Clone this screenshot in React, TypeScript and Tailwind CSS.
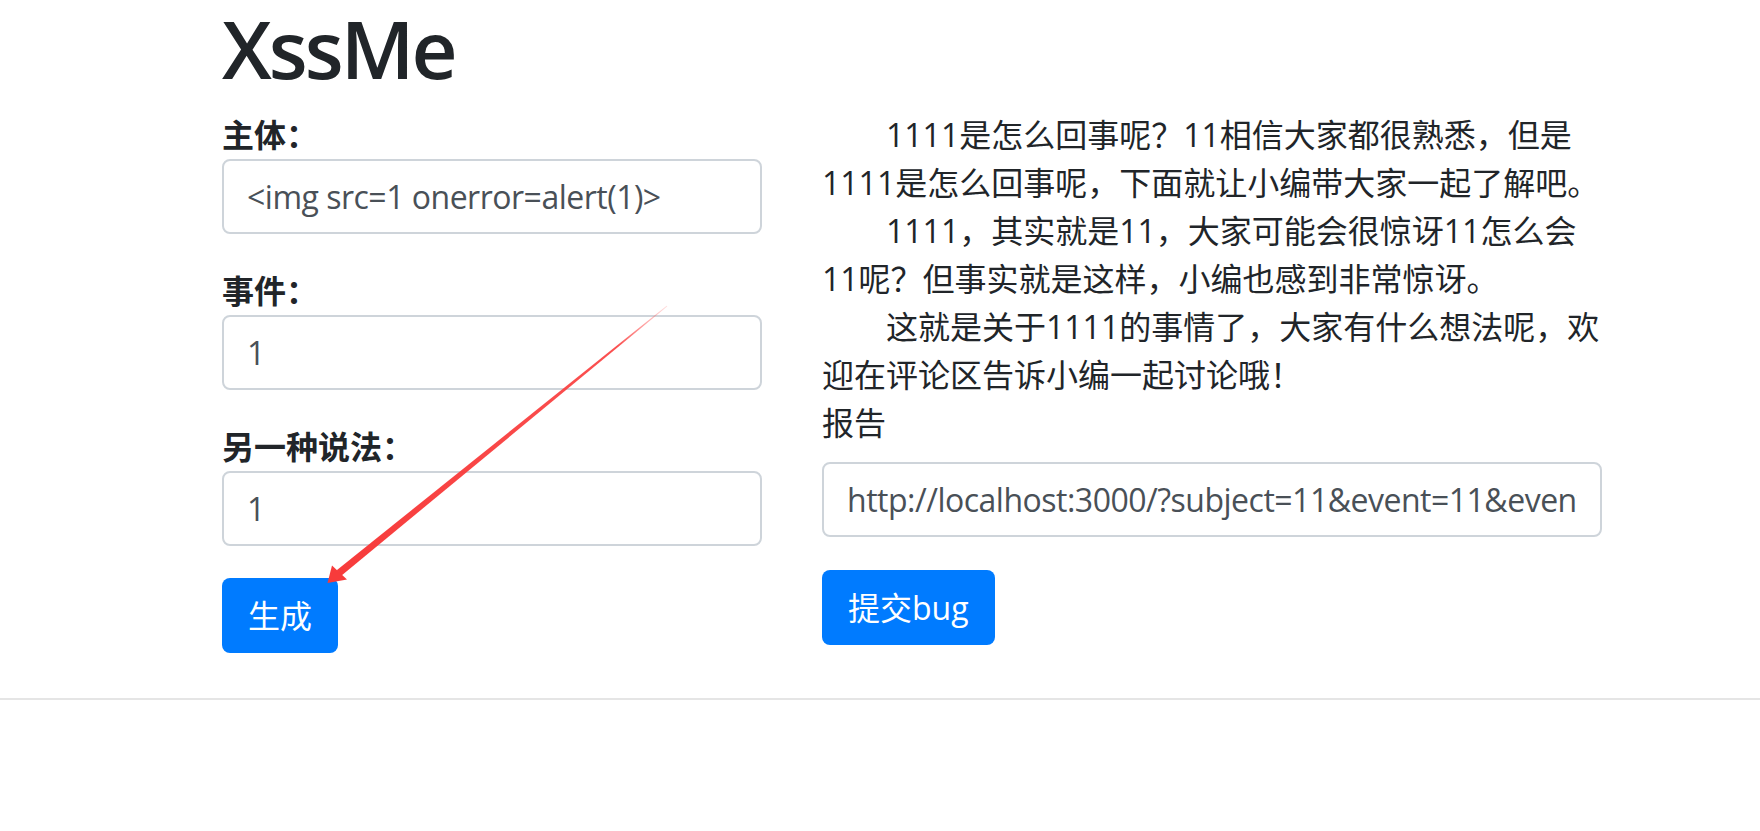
import React from "react";

function Field({ label, value, mb }: { label: string; value: string; mb: string }) {
  return (
    <div className={mb}>
      <label className="block text-[32px] leading-[48px] font-bold text-[#212529]">{label}</label>
      <input
        readOnly
        defaultValue={value}
        className="block w-full h-[75px] border-2 border-[#ced4da] rounded-[8px] px-[23px] text-[32px] leading-[48px] text-[#495057] tracking-[-0.5px] bg-white outline-none"
      />
    </div>
  );
}

export default function App() {
  return (
    <div className="relative w-full min-h-[831px] bg-white text-[#212529] font-['Open_Sans','Noto_Sans_CJK_SC',sans-serif]">
      <div className="pl-[222px]">
        <h1 className="m-0 text-[80px] leading-[96px] font-semibold tracking-[-3px]">XssMe</h1>
        <div className="mt-[15px] flex">
          <div className="w-[540px] flex flex-col items-start">
            <div className="w-full">
              <Field label="主体：" value="<img src=1 onerror=alert(1)>" mb="mb-[33px]" />
              <Field label="事件：" value="1" mb="mb-[33px]" />
              <Field label="另一种说法：" value="1" mb="mb-[32px]" />
            </div>
            <button className="h-[75px] px-[26px] rounded-[8px] bg-[#007bff] text-white text-[32px] leading-[48px]">
              生成
            </button>
          </div>
          <div className="ml-[60px] w-[780px] flex flex-col items-start text-[32px] leading-[48px]">
            <div className="w-full">
              <p className="m-0 indent-[2em]">1111是怎么回事呢？11相信大家都很熟悉，但是1111是怎么回事呢，下面就让小编带大家一起了解吧。</p>
              <p className="m-0 indent-[2em]">1111，其实就是11，大家可能会很惊讶11怎么会11呢？但事实就是这样，小编也感到非常惊讶。</p>
              <p className="m-0 indent-[2em]">这就是关于1111的事情了，大家有什么想法呢，欢迎在评论区告诉小编一起讨论哦！</p>
              <label className="block mb-[15px]">报告</label>
              <input
                readOnly
                defaultValue="http://localhost:3000/?subject=11&event=11&eventSecond=11"
                className="block w-full h-[75px] border-2 border-[#ced4da] rounded-[8px] px-[23px] text-[32px] leading-[48px] text-[#495057] tracking-[-0.5px] bg-white outline-none"
              />
            </div>
            <button className="mt-[33px] h-[75px] px-[26px] rounded-[8px] bg-[#007bff] text-white text-[32px] leading-[48px]">
              提交bug
            </button>
          </div>
        </div>
      </div>
      <div className="mt-[45px] h-[2px] w-full bg-[#e5e5e5]" />

      <svg className="absolute left-0 top-0 w-[1760px] h-[831px] pointer-events-none" viewBox="0 0 1760 831">
        <defs>
          <linearGradient id="arrowGrad" gradientUnits="userSpaceOnUse" x1="667" y1="306" x2="339" y2="573">
            <stop offset="0" stopColor="#ff5a5a" stopOpacity="0.2" />
            <stop offset="0.15" stopColor="#fa3d3d" stopOpacity="0.9" />
            <stop offset="1" stopColor="#f73b3b" stopOpacity="1" />
          </linearGradient>
        </defs>
        <polygon points="667.4,306.3 666.6,305.7 336.7,570.2 341.3,575.8" fill="url(#arrowGrad)" />
        <polygon points="327.5,583 332,565.5 347,579.5" fill="#f73b3b" />
      </svg>
    </div>
  );
}
